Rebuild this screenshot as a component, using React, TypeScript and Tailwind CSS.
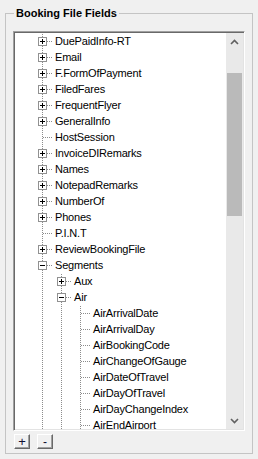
import React from 'react';

type Kind = 'plus' | 'minus' | 'leaf';

interface TreeRow {
    text: string;
    depth: number;
    kind: Kind;
}

const rows: TreeRow[] = [
    { text: 'DuePaidInfo-RT', depth: 1, kind: 'plus' },
    { text: 'Email', depth: 1, kind: 'plus' },
    { text: 'F.FormOfPayment', depth: 1, kind: 'plus' },
    { text: 'FiledFares', depth: 1, kind: 'plus' },
    { text: 'FrequentFlyer', depth: 1, kind: 'plus' },
    { text: 'GeneralInfo', depth: 1, kind: 'plus' },
    { text: 'HostSession', depth: 1, kind: 'leaf' },
    { text: 'InvoiceDIRemarks', depth: 1, kind: 'plus' },
    { text: 'Names', depth: 1, kind: 'plus' },
    { text: 'NotepadRemarks', depth: 1, kind: 'plus' },
    { text: 'NumberOf', depth: 1, kind: 'plus' },
    { text: 'Phones', depth: 1, kind: 'plus' },
    { text: 'P.I.N.T', depth: 1, kind: 'leaf' },
    { text: 'ReviewBookingFile', depth: 1, kind: 'plus' },
    { text: 'Segments', depth: 1, kind: 'minus' },
    { text: 'Aux', depth: 2, kind: 'plus' },
    { text: 'Air', depth: 2, kind: 'minus' },
    { text: 'AirArrivalDate', depth: 3, kind: 'leaf' },
    { text: 'AirArrivalDay', depth: 3, kind: 'leaf' },
    { text: 'AirBookingCode', depth: 3, kind: 'leaf' },
    { text: 'AirChangeOfGauge', depth: 3, kind: 'leaf' },
    { text: 'AirDateOfTravel', depth: 3, kind: 'leaf' },
    { text: 'AirDayOfTravel', depth: 3, kind: 'leaf' },
    { text: 'AirDayChangeIndex', depth: 3, kind: 'leaf' },
    { text: 'AirEndAirport', depth: 3, kind: 'leaf' },
];

const DOT = '#8c8c8c';
const INDENT = 19;

// x of the tree line for a level, inside the row's gutter svg
const lineX = (level: number) => 27 + INDENT * (level - 1);

const VLine = ({ x, y1, y2 }: { x: number; y1: number; y2: number }) => (
    <line x1={x + 0.5} y1={y1} x2={x + 0.5} y2={y2} stroke={DOT} strokeDasharray="1 1" shapeRendering="crispEdges" />
);

const RowGutter = ({ row }: { row: TreeRow }) => {
    const width = 40 + INDENT * (row.depth - 1);
    const lx = lineX(row.depth);
    return (
        <svg width={width} height={16} className="shrink-0 block">
            {/* every level keeps going past the bottom of the view */}
            {Array.from({ length: row.depth }, (_, i) => (
                <VLine key={i} x={lineX(i + 1)} y1={i + 1 === row.depth ? 1 : 1} y2={16} />
            ))}
            <line x1={lx + 1} y1={8.5} x2={lx + 11} y2={8.5} stroke={DOT} strokeDasharray="1 1" shapeRendering="crispEdges" />
            {row.kind === 'minus' && <VLine x={lineX(row.depth + 1) - 0} y1={13} y2={16} />}
            {row.kind !== 'leaf' && (
                <g shapeRendering="crispEdges">
                    <rect x={lx - 3.5} y={4.5} width={8} height={8} fill="#fff" stroke="#919191" />
                    <line x1={lx - 2} y1={8.5} x2={lx + 3} y2={8.5} stroke="#000" />
                    {row.kind === 'plus' && <line x1={lx + 0.5} y1={6} x2={lx + 0.5} y2={11} stroke="#000" />}
                </g>
            )}
        </svg>
    );
};

const Chevron = ({ up }: { up: boolean }) => (
    <svg width={9} height={6} viewBox="0 0 9 6">
        <path d={up ? 'M1 5 L4.5 1.5 L8 5' : 'M1 1 L4.5 4.5 L8 1'} fill="none" stroke="#606060" strokeWidth={1.6} />
    </svg>
);

export default function App() {
    return (
        <div className="w-[258px] h-[459px] bg-[#f0f0f0] pt-[13px] pl-[5px] font-['Liberation_Sans',Arial,sans-serif] text-black overflow-hidden">
            {/* Group box */}
            <div className="relative w-[248px] h-[441px] border border-[#c4c4c4] pt-[17px] pl-[7px] flex flex-col">
                <span className="absolute left-[8px] top-[-7px] px-[2px] bg-[#f0f0f0] text-[11px] leading-[13px] font-bold">
                    Booking File Fields
                </span>

                {/* Tree view */}
                <div className="w-[232px] h-[400px] border border-t-[#a0a0a0] border-l-[#a0a0a0] border-r-white border-b-white p-[1px] shadow-[inset_1px_1px_0_#696969,inset_-1px_-1px_0_#e3e3e3]">
                    <div className="flex h-full bg-white">
                        <div className="flex-1 overflow-hidden">
                            {rows.map((row) => (
                                <div key={row.text} className="flex items-center h-[16px]">
                                    <RowGutter row={row} />
                                    <span className="text-[11px] leading-[16px] whitespace-nowrap tracking-[-0.2px]">{row.text}</span>
                                </div>
                            ))}
                        </div>

                        {/* Scrollbar */}
                        <div className="w-[17px] flex flex-col bg-[#e9e9e9]">
                            <div className="h-[17px] flex items-center justify-center">
                                <Chevron up />
                            </div>
                            <div className="flex-1 px-[1px]">
                                <div className="mt-[23px] h-[143px] bg-[#bababa]" />
                            </div>
                            <div className="h-[17px] flex items-center justify-center">
                                <Chevron up={false} />
                            </div>
                        </div>
                    </div>
                </div>

                {/* Add / remove buttons */}
                <div className="flex gap-[7px] mt-[3px] ml-[1px]">
                    <button className="w-[16px] h-[15px] flex items-center justify-center bg-[#f0f0f0] border border-t-white border-l-white border-r-[#696969] border-b-[#696969] shadow-[inset_-1px_-1px_0_#a0a0a0] text-[13px] leading-none text-[#101030]">
                        +
                    </button>
                    <button className="w-[16px] h-[15px] flex items-center justify-center bg-[#f0f0f0] border border-t-white border-l-white border-r-[#696969] border-b-[#696969] shadow-[inset_-1px_-1px_0_#a0a0a0] text-[12px] leading-none text-[#101030]">
                        -
                    </button>
                </div>
            </div>
        </div>
    );
}
